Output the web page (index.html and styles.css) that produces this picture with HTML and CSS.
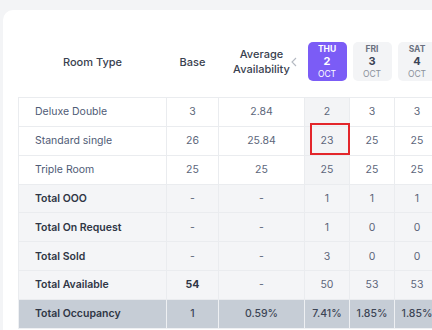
FILE: index.html
```html
<!DOCTYPE html>
<html lang="en">
<head>
<meta charset="utf-8">
<title>Inventory</title>
<link rel="stylesheet" href="styles.css">
</head>
<body>
<div class="card">
  <table class="grid">
    <colgroup>
      <col class="c-name"><col class="c-base"><col class="c-avg"><col class="c-day"><col class="c-day"><col class="c-day">
    </colgroup>
    <thead>
      <tr>
        <th>Room Type</th>
        <th>Base</th>
        <th class="h-avg">
          <span class="avg-label">Average<br>Availability</span>
          <svg class="prev" width="6" height="10" viewBox="0 0 6 10"><polyline points="5,1 1,5 5,9" fill="none" stroke="#b4b9c2" stroke-width="1.1"/></svg>
        </th>
        <th><div class="chip active"><span class="dow">THU</span><span class="dnum">2</span><span class="mon">OCT</span></div></th>
        <th><div class="chip"><span class="dow">FRI</span><span class="dnum">3</span><span class="mon">OCT</span></div></th>
        <th><div class="chip"><span class="dow">SAT</span><span class="dnum">4</span><span class="mon">OCT</span></div></th>
      </tr>
    </thead>
    <tbody>
      <tr class="room">
        <td class="name">Deluxe Double</td><td>3</td><td>2.84</td><td class="today">2</td><td>3</td><td>3</td>
      </tr>
      <tr class="room">
        <td class="name">Standard single</td><td>26</td><td>25.84</td><td class="today"><span class="mark"></span>23</td><td>25</td><td>25</td>
      </tr>
      <tr class="room">
        <td class="name">Triple Room</td><td>25</td><td>25</td><td class="today">25</td><td>25</td><td>25</td>
      </tr>
      <tr class="total">
        <td class="name">Total OOO</td><td>-</td><td>-</td><td>1</td><td>1</td><td>1</td>
      </tr>
      <tr class="total">
        <td class="name">Total On Request</td><td>-</td><td>-</td><td>1</td><td>0</td><td>0</td>
      </tr>
      <tr class="total">
        <td class="name">Total Sold</td><td>-</td><td>-</td><td>3</td><td>0</td><td>0</td>
      </tr>
      <tr class="total">
        <td class="name">Total Available</td><td class="strong">54</td><td>-</td><td>50</td><td>53</td><td>53</td>
      </tr>
      <tr class="occ">
        <td class="name">Total Occupancy</td><td>1</td><td>0.59%</td><td>7.41%</td><td>1.85%</td><td>1.85%</td>
      </tr>
    </tbody>
  </table>
</div>
</body>
</html>
```
FILE: styles.css
```css
html, body {
  margin: 0;
  height: 330px;
  overflow: hidden;
}
body {
  background: #f3f4f6;
  font-family: Inter, "Open Sans", "DejaVu Sans", sans-serif;
  color: #3b4456;
}
.card {
  margin: 10px 0 0 3px;
  width: 470px;
  background: #fff;
  border-radius: 10px 0 0 0;
  padding: 16px 0 30px 15px;
}
.grid {
  border-collapse: collapse;
  table-layout: fixed;
  width: 421px;
}
.c-name { width: 148px; }
.c-base { width: 52px; }
.c-avg { width: 86px; }
.c-day { width: 45px; }

thead th {
  height: 71px;
  padding: 0;
  font-size: 11px;
  font-weight: 500;
  color: #39414f;
  text-align: center;
  vertical-align: middle;
}
.h-avg {
  position: relative;
  line-height: 15px;
}
.prev {
  position: absolute;
  right: 8px;
  top: 50%;
  margin-top: -5px;
}
.chip {
  width: 39px;
  height: 39px;
  margin: 0 auto;
  border-radius: 5px;
  background: #f3f4f6;
  display: flex;
  flex-direction: column;
  align-items: center;
  justify-content: center;
  color: #6b7280;
}
.chip .dow {
  font-size: 8.5px;
  font-weight: 700;
  line-height: 11px;
}
.chip .dnum {
  font-size: 11px;
  font-weight: 700;
  line-height: 13px;
  color: #3b4456;
}
.chip .mon {
  font-size: 8.5px;
  font-weight: 400;
  line-height: 12px;
  color: #8a909b;
}
.chip.active {
  background: #7b5cf6;
  color: #fff;
}
.chip.active .dnum,
.chip.active .mon {
  color: #fff;
}

tbody td {
  height: 27.85px;
  padding: 0;
  border: 1px solid #eaecef;
  text-align: center;
  font-size: 10.5px;
  color: #5c667a;
}
tbody td.name {
  text-align: left;
  padding-left: 16px;
}
.room td.name {
  color: #4f5b76;
}
.room td.today {
  background: #f3f4f6;
  position: relative;
}
.mark {
  position: absolute;
  left: 5px;
  top: -4px;
  width: 40px;
  height: 32px;
  box-sizing: border-box;
  border: 2px solid #e3262b;
}
.total td {
  background: #f4f5f7;
}
.total td.name {
  font-weight: 600;
  color: #2f3645;
}
.total td.strong {
  font-weight: 700;
  color: #2f3645;
}
.occ td {
  background: #c6cdd6;
  border-color: #eef0f3;
  color: #3d4555;
  font-weight: 500;
}
.occ td.name {
  font-weight: 600;
  color: #2f3645;
}
```
